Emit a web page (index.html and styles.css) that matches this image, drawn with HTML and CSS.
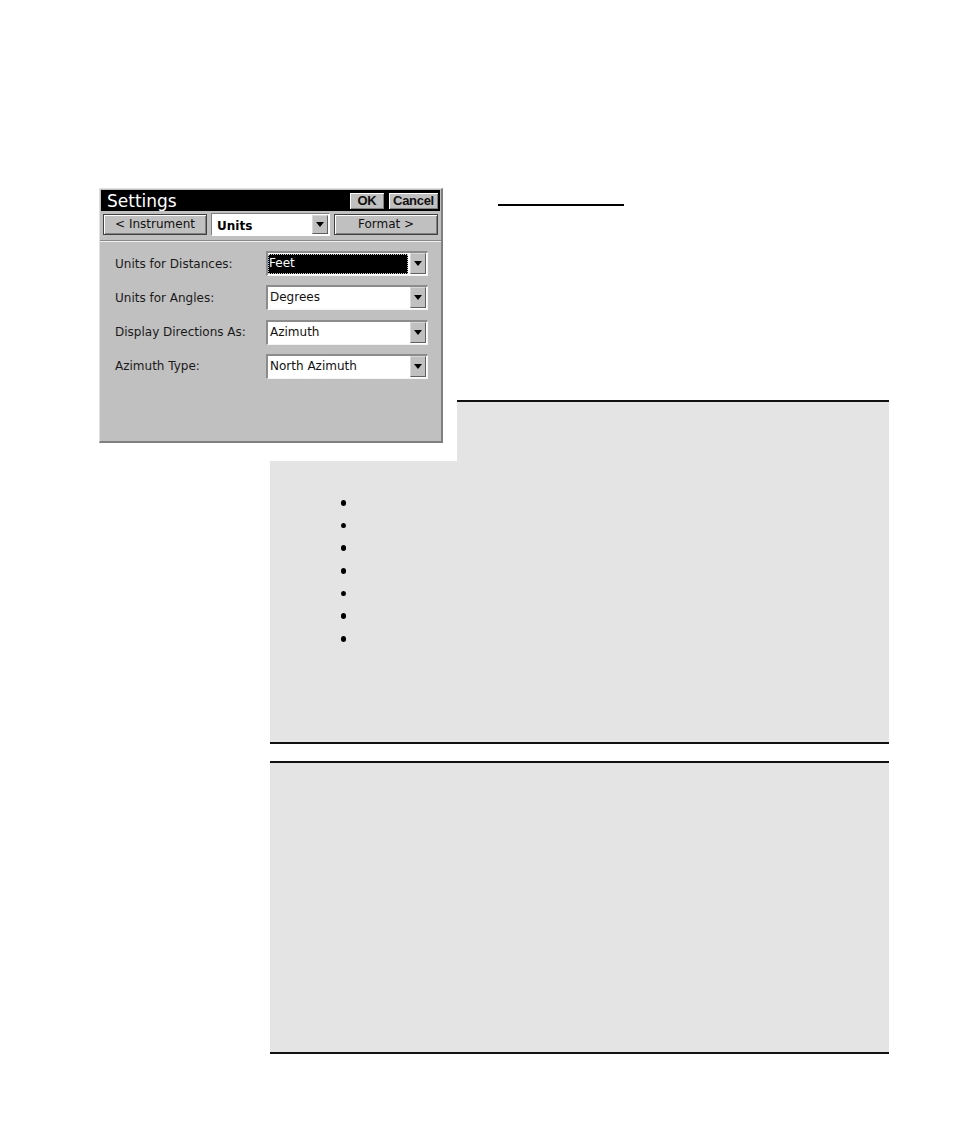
FILE: index.html
```html
<!DOCTYPE html>
<html>
<head>
<meta charset="utf-8">
<link rel="stylesheet" href="styles.css">
</head>
<body>
<div class="page">
  <div class="content">
    <div class="heading-rule"></div>
    <div class="note note-first">
      <div class="bullets">
        <span class="dot"></span><span class="dot"></span><span class="dot"></span><span class="dot"></span><span class="dot"></span><span class="dot"></span><span class="dot"></span>
      </div>
    </div>
    <div class="note note-second"></div>
  </div>

  <div class="figure">
    <div class="dialog">
      <div class="titlebar">
        <span class="title">Settings</span>
        <span class="tbtn tbtn-ok">OK</span>
        <span class="tbtn tbtn-cancel">Cancel</span>
      </div>
      <div class="navrow">
        <span class="btn btn-nav">&lt; Instrument</span>
        <span class="navcombo"><span class="navcombo-text">Units</span><span class="arrow"><span class="tri"></span></span></span>
        <span class="btn btn-nav">Format &gt;</span>
      </div>
      <div class="separator"></div>
      <div class="form">
        <div class="row"><span class="label">Units for Distances:</span><span class="combo"><span class="field field-sel"><span class="focus">Feet</span></span><span class="arrow"><span class="tri"></span></span></span></div>
        <div class="row"><span class="label">Units for Angles:</span><span class="combo"><span class="field">Degrees</span><span class="arrow"><span class="tri"></span></span></span></div>
        <div class="row"><span class="label">Display Directions As:</span><span class="combo"><span class="field">Azimuth</span><span class="arrow"><span class="tri"></span></span></span></div>
        <div class="row"><span class="label">Azimuth Type:</span><span class="combo"><span class="field">North Azimuth</span><span class="arrow"><span class="tri"></span></span></span></div>
      </div>
    </div>
  </div>
</div>
</body>
</html>
```

FILE: styles.css
```css
html, body {
  margin: 0;
  padding: 0;
  background: #fff;
}

.page {
  position: relative;
  width: 954px;
  height: 1146px;
  font-family: "DejaVu Sans", "Liberation Sans", sans-serif;
  overflow: hidden;
}

.content {
  padding-left: 270px;
  padding-top: 204px;
  width: 619px;
}

.heading-rule {
  margin-left: 228px;
  width: 126px;
  height: 2px;
  background: #000;
}

.note {
  background: #e4e4e4;
  border-top: 2px solid #111;
  border-bottom: 2px solid #111;
  box-sizing: border-box;
}

.note-first {
  margin-top: 194px;
  height: 344px;
  padding-top: 98px;
  padding-left: 71px;
}

.note-second {
  margin-top: 17px;
  height: 293px;
}

.bullets {
  display: flex;
  flex-direction: column;
  gap: 17.2px;
}

.dot {
  display: block;
  width: 5px;
  height: 5.5px;
  border-radius: 50%;
  background: #000;
}

/* screenshot figure overlaying the note */
.figure {
  position: absolute;
  left: 90px;
  top: 180px;
  width: 367px;
  height: 281px;
  background: #fff;
}

.dialog {
  margin-left: 9px;
  margin-top: 8px;
  width: 344px;
  height: 255px;
  box-sizing: border-box;
  background: #c0c0c0;
  border-top: 1px solid #e0e0e0;
  border-left: 1px solid #e0e0e0;
  border-right: 2px solid #7f7f7f;
  border-bottom: 2px solid #7f7f7f;
  color: #000;
  font-size: 12px;
}

.titlebar {
  margin: 1px 1px 0 1px;
  height: 21px;
  background: #000;
  display: flex;
  align-items: center;
  gap: 3px;
  padding-right: 1px;
}

.title {
  flex: 1;
  color: #fff;
  font-size: 17px;
  padding-left: 6px;
  line-height: 21px;
  margin-top: 1px;
}

.tbtn {
  height: 18px;
  box-sizing: border-box;
  background: #c0c0c0;
  border: 1px solid #000;
  box-shadow: inset 1px 1px #fff, inset -1px -1px #808080;
  font-family: "Liberation Sans", sans-serif;
  font-weight: bold;
  font-size: 13px;
  line-height: 16px;
  text-align: center;
  letter-spacing: -0.3px;
  color: #111;
}

.tbtn-ok { width: 36px; }
.tbtn-cancel { width: 51px; }

.navrow {
  display: flex;
  align-items: center;
  gap: 4px;
  margin-top: 2px;
  padding-left: 3px;
  height: 23px;
}

.btn {
  height: 21px;
  box-sizing: border-box;
  background: #c0c0c0;
  border: 1px solid #404040;
  box-shadow: inset 1px 1px #fff, inset -1px -1px #808080;
  text-align: center;
  line-height: 19px;
  font-size: 12px;
  color: #111;
}

.btn-nav { width: 104px; }

.navcombo {
  width: 119px;
  height: 23px;
  box-sizing: border-box;
  background: #fff;
  border-top: 1px solid #808080;
  border-left: 1px solid #808080;
  border-bottom: 1px solid #fff;
  border-right: 1px solid #fff;
  display: flex;
  align-items: stretch;
  padding: 1px 1px 1px 5px;
}

.navcombo-text {
  flex: 1;
  font-weight: bold;
  font-size: 12px;
  line-height: 20px;
  margin-top: 1px;
}

.separator {
  margin-top: 4px;
  height: 1px;
  background: #8a8a8a;
  border-bottom: 1px solid #f0f0f0;
}

.form {
  padding-top: 9px;
  padding-left: 15px;
  display: flex;
  flex-direction: column;
  gap: 9.3px;
}

.row {
  display: flex;
  align-items: center;
  height: 25px;
}

.label {
  width: 151px;
  font-size: 12px;
  color: #1a1a1a;
}

.combo {
  width: 162px;
  height: 25px;
  box-sizing: border-box;
  background: #fff;
  border-top: 2px solid #8c8c8c;
  border-left: 2px solid #8c8c8c;
  border-bottom: 1px solid #f4f4f4;
  border-right: 1px solid #f4f4f4;
  display: flex;
  align-items: stretch;
  padding: 0 1px 1px 0;
}

.field {
  flex: 1;
  font-size: 12px;
  line-height: 21px;
  padding-left: 2px;
  color: #111;
}

.field-sel {
  background: #000;
  color: #fff;
  margin: 1px 2px 0 0;
  padding-left: 0;
  line-height: 18px;
  outline: 1px dotted #c8c8c8;
  outline-offset: -1px;
}

.focus {
  padding-left: 1px;
}

.arrow {
  width: 16px;
  box-sizing: border-box;
  background: #c0c0c0;
  border: 1px solid #d8d8d8;
  border-right-color: #606060;
  border-bottom-color: #606060;
  display: flex;
  align-items: center;
  justify-content: center;
}

.tri {
  width: 0;
  height: 0;
  border-left: 4px solid transparent;
  border-right: 4px solid transparent;
  border-top: 5px solid #000;
}
```
